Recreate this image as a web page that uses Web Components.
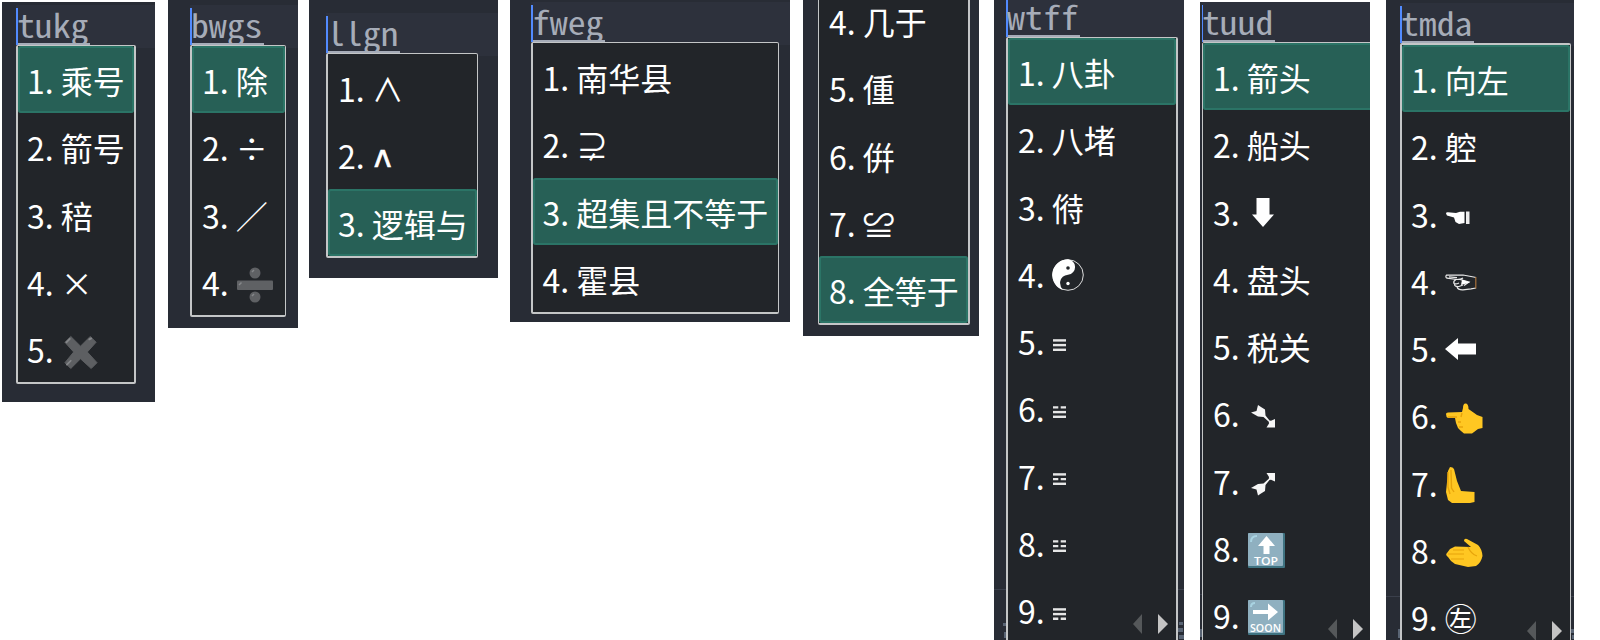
<!DOCTYPE html>
<html lang="zh-CN"><head><meta charset="utf-8"><title>Input method candidates</title>
<style>
html,body{margin:0;background:#fff}
body{width:1600px;height:640px;overflow:hidden}
</style></head><body>
<shot-strip></shot-strip>
<script>
const GLYPHS = {
  cross:`<svg width="35" height="36" viewBox="0 0 36 36"><path d="M8 2 18 12 28 2 34 8 25 18 35 29 29 35 18 25 8 35 2 29 11 18 2 8Z" fill="#5d5f62" stroke="#5d5f62" stroke-linejoin="round"/><path d="M3.500 8 7 4.500M27 5 29 4M4 31 8 27" stroke="#85878a" stroke-width="1.800" fill="none" stroke-linecap="round"/></svg>`,
  divide:`<svg width="36" height="36" viewBox="0 0 36 36"><circle cx="18" cy="6" r="5.500" fill="#5f6164"/><circle cx="18" cy="30" r="5.500" fill="#5f6164"/><rect x="0" y="13.500" width="36" height="9.500" rx="1" fill="#5f6164"/><path d="M2 18 4.500 15.500M15 5 17 3M15 29 17 27" stroke="#85878a" stroke-width="1.500"/></svg>`,
  yinyang:`<svg width="32" height="32" viewBox="0 0 32 32"><circle cx="16" cy="16" r="15.300" fill="none" stroke="#ddd" stroke-width="1"/><path d="M16 .300A15.700 15.700 0 0 0 11 30.900Q7.500 27 8.200 22.500 9.500 16.500 16 15.800A7.600 7.600 0 0 0 23 7.500Q22.500 1.500 16 .300Z" fill="#fff"/><circle cx="16" cy="9" r="1.800" fill="#222529"/><circle cx="16" cy="24.500" r="1.700" fill="#fff"/></svg>`,
  down:`<svg width="22" height="29" viewBox="0 0 22 29"><path d="M4.500 0H17.500V16.500H22L11 29 0 16.500H4.500Z" fill="#fff"/></svg>`,
  left:`<svg width="31" height="22" viewBox="0 0 31 22"><path d="M31 5.500V16.500H13V22L0 11 13 0V5.500Z" fill="#fff"/></svg>`,
  fistSolid:`<svg width="24" height="14" viewBox="0 0 24 14"><path d="M0 2.500Q0 1 2 1.200L10 2 14 .800H18.500V12L13 13 9.500 11 8 6.500 1 4.500Z" fill="#fff"/><path d="M20 .500H23.500V13H20Z" fill="#eee"/></svg>`,
  fistLine:`<svg width="32" height="17" viewBox="0 0 32 17" fill="none" stroke="#e8e8e8" stroke-width="1.200"><path d="M31 3.500 26 2.500 18 1 1.500 1.200Q0 3 2 4.200L12 5.500Q16 5.500 18 4M11 5.500Q8 7 9 9.500 11 10.500 14 9 M9.500 9.500Q9 13 14 12.500L18 11M12 13Q13 16 18 15.800L26 14.800 31 14M15 5.500 24 8 19 11.500M4 2.800 12 3.600"/><path d="M17 5.500 25 8.500 16 11Z" fill="#fff" stroke="none"/><path d="M30.800 3V14.500" stroke="#a8703a"/></svg>`,
  arrowSE:`<svg width="25" height="23" viewBox="0 0 25 23"><path d="M7 0 10 2 14 4.500 14.500 10.500 18.500 15.500 20 15.800 24 14V22.500H15.500L18 18.500 17.800 16.800 12.500 12 7 11.500 0 7.500 5.500 6Z" fill="#f6f6f6"/></svg>`,
  arrowNE:`<svg width="25" height="23" viewBox="0 0 25 23"><path d="M7 22.500 10 20.500 14 18 14.500 12 18.500 7 20 6.700 24 8.500V0H15.500L18 4 17.800 5.700 12.500 10.500 7 11 0 15 5.500 16.500Z" fill="#f6f6f6"/></svg>`,
  top:`<svg width="37" height="35" viewBox="0 0 37 35"><rect width="37" height="35" rx="1" fill="#3f7381"/><rect width="35" height="33" rx="1" fill="#8fb0c0"/><path d="M3 9Q3 3 9 3" stroke="#a9d3e2" stroke-width="2" fill="none"/><path d="M18.500 3 27 13H21.500V21H15.500V13H10Z" fill="#fff"/><text x="18" y="31.500" text-anchor="middle" font-size="11" font-weight="600" textLength="24" lengthAdjust="spacingAndGlyphs" font-family="Open Sans,sans-serif" fill="#fff">TOP</text></svg>`,
  soon:`<svg width="37" height="35" viewBox="0 0 37 35"><rect width="37" height="35" rx="1" fill="#3f7381"/><rect width="35" height="33" rx="1" fill="#8fb0c0"/><path d="M3 7Q3 3 7 3" stroke="#a9d3e2" stroke-width="2" fill="none"/><path d="M5 10H20V3.500L30 12 20 20.500V14H5Z" fill="#fff"/><text x="17.500" y="31.500" text-anchor="middle" font-size="11" font-weight="600" textLength="31" lengthAdjust="spacingAndGlyphs" font-family="Open Sans,sans-serif" fill="#fff">SOON</text></svg>`,
  point:`<svg width="37" height="31" viewBox="0 0 37 31"><path d="M0 11Q0 9.500 2 9.500L16 9 17 5Q17 0 20 0.500 22.500 1 22.500 6L31 12 36.500 14V25L32 26 26 30.500H18L15 28 12 25 10 20 9 15H2Q0 14 0 11Z" fill="#ffc722"/><path d="M2 14H11M12 19H15M13 24H17M16 10 15 14" stroke="#e7a40b" stroke-width="1.400"/></svg>`,
  palmL:`<svg width="29" height="36" viewBox="0 0 29 36"><path d="M2 4 4 0Q7 0 8 2L11 14 15 24 28.500 25V35L24 36H6L2 33 0 25 1 15Z" fill="#ffc722"/><path d="M2 5V20L4 27M5 3 5.500 21 8 25" stroke="#e7a40b" stroke-width="1.400" fill="none"/></svg>`,
  palm:`<svg width="37" height="29" viewBox="0 0 37 29"><path d="M1 15 4 11 9 8.500 25 9 18 3Q18 0 21 1L32 7Q36 11 36.500 18 35 25 30 28L22 29 9 26 5 23 2 19Q-1 17 1 15Z" fill="#ffc722"/><path d="M2 16H18M5 21H18M7 12H18M22 9Q25 16 31 18" stroke="#e7a40b" stroke-width="1.200" fill="none"/></svg>`,
  tri:bits=>`<svg width="13" height="13" viewBox="0 0 13 13">${bits.map((b,i)=>{const y=i*4.700+.2;return b?`<rect y="${y}" width="13" height="2.400" fill="#e6e6e6"/>`:`<path d="M0 ${y+1.200}H5.300M7.700 ${y+1.200}H13" stroke="#e6e6e6" stroke-width="2.400"/>`}).join('')}</svg>`
};
class CandRow extends HTMLElement{
  constructor(){super();this.attachShadow({mode:'open'})}
  connectedCallback(){
    this.shadowRoot.innerHTML=`<style>
:host{display:flex;box-sizing:border-box;height:67.250px;flex:none;padding-left:var(--inset,9px);white-space:pre;color:#fff;
 font:32px/68.800px "Noto Sans CJK SC",sans-serif}
:host([selected]){background:#276056;box-shadow:inset 0 0 0 2px #2b7466;border-radius:3px}
b{font-weight:400;flex:none}
span{flex:none;display:block}
.art{margin-left:var(--dx,0);padding-top:var(--dy,16px);line-height:0}
.alt{font-family:"DejaVu Sans",sans-serif;margin:2px 0 0 2px;-webkit-text-stroke:.7px #fff;font-size:30px}
</style><b>${this.getAttribute('n')}. </b>`;
    const art=this.getAttribute('art'),s=document.createElement('span');
    if(art){
      s.className='art';
      s.innerHTML=/^tri\d/.test(art)?GLYPHS.tri([...art.slice(3)].map(Number)):GLYPHS[art];
    }else{ s.textContent=this.getAttribute('word'); if(this.hasAttribute('alt')) s.className='alt'; }
    this.shadowRoot.append(s);
  }
}
customElements.define('cand-row',CandRow);

class ImeShot extends HTMLElement{
  constructor(){super();this.attachShadow({mode:'open'})}
  set data(d){
    const rows=d.rows.map(([n,w,o={}])=>`<cand-row n="${n}" ${n===d.sel?'selected':''} ${o.art?`art="${o.art}"`:`word="${w}"`} ${o.alt?'alt':''} style="--dy:${o.dy??16}px;--dx:${o.dx??0}px"></cand-row>`).join('');
    this.shadowRoot.innerHTML=`<style>
:host{display:flex;flex-direction:column;flex:none;box-sizing:border-box;position:relative;overflow-x:clip;overflow-y:visible;background:#282c35;
 width:${d.w}px;height:${d.h}px;margin:${d.y||0}px 0 0 ${d.gap}px;padding-left:${d.left}px;padding-top:${Math.max(0,d.top)}px}
.band{position:absolute;left:${d.left}px;right:0;top:${Math.max(0,d.top-40)}px;height:${43+Math.min(0,d.top-40)}px;background:#2d313c}
.code{position:relative;height:37px;margin-top:-37px;flex:none;box-sizing:border-box;border-left:${d.caret||2}px solid #528bff;font:32px/37px "Noto Sans Mono CJK SC","Noto Sans Mono",monospace;color:#a6acb8}
.code div{width:71.500px;height:37px;box-sizing:border-box;border-bottom:2px solid #a6acb8;line-height:32px;white-space:pre}
.code span{display:block;width:64px;margin-left:-1px;transform:scaleX(1.117);transform-origin:0 0}
.pop{position:relative;box-sizing:border-box;flex:none;width:${d.pw}px;height:${d.ph}px;${d.top<0?`margin-top:${d.top}px;`:''}border:solid #c4c6c7;border-width:${d.bw};border-radius:2px;background:#222529;display:flex;flex-direction:column;--inset:${d.inset||9}px}
.rule{position:absolute;left:0;right:0;top:${d.rule||0}px;height:1px;background:#3a3f4b}
.nav{position:absolute;display:flex;gap:16px;left:${d.nx}px;top:${d.ny}px}
.bit{position:absolute;background:#596474}
</style>${d.code?`<div class="band"></div><div class="code"><div><span>${d.code}</span></div></div>`:''}
${d.rule?'<div class="rule"></div>':''}${(d.bits||[]).map(([x,y,w,h])=>`<i class="bit" style="left:${x}px;top:${y}px;width:${w}px;height:${h}px"></i>`).join('')}
<div class="pop">${rows}</div>
${d.nx?`<div class="nav"><svg width="9" height="20"><path d="M9 0V20L0 10Z" fill="#55585a"/></svg><svg width="10" height="20"><path d="M0 0V20L10 10Z" fill="#c4c4c4"/></svg></div>`:''}`;
  }
}
customElements.define('ime-shot',ImeShot);

const SHOTS=[
 {gap:2,y:2,w:153,h:399.5,left:14,top:43,code:'tukg',pw:120,ph:339,bw:'1px 2px 2px 2px',sel:1,rows:[[1,'乘号'],[2,'箭号'],[3,'稖'],[4,'×'],[5,'',{art:'cross',dx:2,dy:19}]]},
 {gap:13,w:130,h:328,left:22,top:45,code:'bwgs',pw:96,ph:272,bw:'1px 1px 2px 2px',sel:1,inset:10,rows:[[1,'除'],[2,'÷'],[3,'／'],[4,'',{art:'divide',dx:1,dy:19}]]},
 {gap:11,w:189,h:278,left:17,top:53,code:'llgn',pw:152,ph:205,bw:'1px 1px 2px 2px',sel:3,inset:10,rows:[[1,'∧'],[2,'ʌ',{alt:1}],[3,'逻辑与']]},
 {gap:12,w:280,h:322,left:21,top:42,code:'fweg',pw:248,ph:272,bw:'1px 1px 2px 2px',sel:3,inset:9.5,rows:[[1,'南华县'],[2,'⊋'],[3,'超集且不等于'],[4,'霍县']]},
 {gap:13,w:176,h:336,left:15,top:-14,pw:152,ph:339,bw:'1px 2px 2px 1px',sel:8,inset:10,rows:[[4,'几于'],[5,'偅'],[6,'倂'],[7,'≌'],[8,'全等于']]},
 {gap:15,w:190,h:640,left:12,top:37,code:'wtff',pw:172,ph:640,bw:'1px 2px 2px 2px',sel:1,inset:10,rule:589,nx:139,ny:614,bits:[[9,623,3,3],[10,632,2,6],[185,622,4,3],[184,628,5,4],[185,635,5,4]],rows:[[1,'八卦'],[2,'八堵'],[3,'偫'],[4,'',{art:'yinyang',dy:19}],[5,'',{art:'tri111',dx:1.5,dy:30.5}],[6,'',{art:'tri011',dx:1.5,dy:30.5}],[7,'',{art:'tri101',dx:1.5,dy:30.5}],[8,'',{art:'tri001',dx:1.5,dy:30.5}],[9,'',{art:'tri110',dx:1.5,dy:30.5}]]},
 {gap:16,y:2,w:170,h:638,left:2,top:40,code:'tuud',caret:1,pw:200,ph:640,bw:'1px',sel:1,inset:10,rule:592,nx:128,ny:617,bits:[[0,627,2,8]],rows:[[1,'箭头'],[2,'船头'],[3,'',{art:'down',dx:5,dy:20.5}],[4,'盘头'],[5,'税关'],[6,'',{art:'arrowSE',dx:4,dy:26}],[7,'',{art:'arrowNE',dx:4,dy:26}],[8,'',{art:'top',dx:1,dy:19}],[9,'',{art:'soon',dx:1,dy:19}]]},
 {gap:16,w:188,h:640,left:14,top:43,code:'tmda',pw:171,ph:640,bw:'2px 1px 2px 2px',sel:1,rule:596,nx:140.5,ny:621,bits:[[12,629,2,9],[185,629,3,4],[186,635,2,4]],rows:[[1,'向左'],[2,'躻'],[3,'',{art:'fistSolid',dx:1,dy:31}],[4,'',{art:'fistLine',dx:.5,dy:27}],[5,'',{art:'left',dx:0,dy:24}],[6,'',{art:'point',dx:1,dy:21.5}],[7,'',{art:'palmL',dx:1,dy:18.5}],[8,'',{art:'palm',dx:1,dy:22}],[9,'㊧']]}
];
class ShotStrip extends HTMLElement{
  constructor(){super();this.attachShadow({mode:'open'}).innerHTML='<style>:host{display:flex;align-items:flex-start;width:1600px;height:640px;overflow:hidden}</style>'}
  connectedCallback(){for(const d of SHOTS){const e=document.createElement('ime-shot');e.data=d;this.shadowRoot.append(e)}}
}
customElements.define('shot-strip',ShotStrip);
</script></body></html>
